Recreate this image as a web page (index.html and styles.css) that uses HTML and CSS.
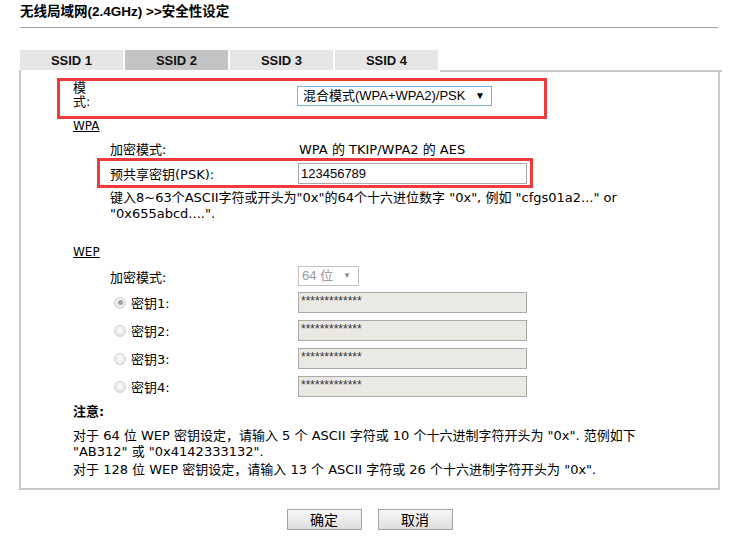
FILE: index.html
```html
<!DOCTYPE html>
<html lang="zh-CN">
<head>
<meta charset="utf-8">
<title>安全性设定</title>
<link rel="stylesheet" href="styles.css">
</head>
<body>
<div class="page">
  <h1 class="title">无线局域网(2.4GHz) &gt;&gt;安全性设定</h1>

  <div class="tabs">
    <div class="tab">SSID 1</div>
    <div class="tab active">SSID 2</div>
    <div class="tab">SSID 3</div>
    <div class="tab">SSID 4</div>
    <div class="tab-fill"></div>
  </div>

  <div class="panel">
    <div class="mark mark-mode">
      <div class="mode-label">模式:</div>
      <div class="select select-mode"><span>混合模式(WPA+WPA2)/PSK</span><span class="arrow">▼</span></div>
    </div>

    <div class="section">WPA</div>
    <div class="field field-enc">
      <div class="label">加密模式:</div>
      <div class="value">WPA 的 TKIP/WPA2 的 AES</div>
    </div>
    <div class="mark mark-psk">
      <div class="label">预共享密钥(PSK):</div>
      <input class="text" type="text" value="123456789">
    </div>
    <p class="help">键入8~63个ASCII字符或开头为"0x"的64个十六进位数字 "0x", 例如 "cfgs01a2..." or<br>"0x655abcd....".</p>

    <div class="section section-wep">WEP</div>
    <div class="field field-wep">
      <div class="label">加密模式:</div>
      <div class="select select-bits"><span>64 位</span><span class="arrow">▼</span></div>
    </div>
    <div class="keys">
      <div class="key">
        <div class="key-label"><span class="radio checked"></span>密钥1:</div>
        <input class="text text-off" type="text" value="*************" disabled>
      </div>
      <div class="key">
        <div class="key-label"><span class="radio"></span>密钥2:</div>
        <input class="text text-off" type="text" value="*************" disabled>
      </div>
      <div class="key">
        <div class="key-label"><span class="radio"></span>密钥3:</div>
        <input class="text text-off" type="text" value="*************" disabled>
      </div>
      <div class="key">
        <div class="key-label"><span class="radio"></span>密钥4:</div>
        <input class="text text-off" type="text" value="*************" disabled>
      </div>
    </div>

    <div class="note-title">注意:</div>
    <p class="note">对于 64 位 WEP 密钥设定，请输入 5 个 ASCII 字符或 10 个十六进制字符开头为 "0x". 范例如下<br>"AB312" 或 "0x4142333132".</p>
    <p class="note note-2">对于 128 位 WEP 密钥设定，请输入 13 个 ASCII 字符或 26 个十六进制字符开头为 "0x".</p>
  </div>

  <div class="buttons">
    <button class="btn" type="button">确定</button>
    <button class="btn" type="button">取消</button>
  </div>
</div>
</body>
</html>
```

FILE: styles.css
```css
* { box-sizing: border-box; }

body {
  margin: 0;
  background: #fff;
  color: #000;
  font-family: "DejaVu Sans", "Noto Sans CJK SC", sans-serif;
  font-size: 13px;
}

.page {
  width: 701px;
  margin-left: 19px;
}

.title {
  margin: 0 0 0 1px;
  width: 698px;
  padding: 5px 0 8px 0;
  font: bold 13.5px/14px "Liberation Sans", "Noto Sans CJK SC", sans-serif;
  border-bottom: 1px solid #a0a0a0;
}

.tabs {
  display: flex;
  margin-top: 22px;
  margin-left: 1px;
  height: 22px;
}

.tab {
  width: 103px;
  height: 20px;
  margin-right: 2px;
  background: #e6e6e6;
  text-align: center;
  font: bold 13px/21px "Liberation Sans", sans-serif;
  color: #111;
}

.tab.active { background: #c4c4c4; }

.tab-fill {
  flex: 1;
  margin-right: -2px;
  border-bottom: 2px solid #c8c8c8;
  border-right: 2px solid #c8c8c8;
  margin-top: 20px;
  height: 2px;
}

.panel {
  border: 2px solid #c8c8c8;
  border-top: 0;
  margin-top: -2px;
  padding: 8px 0 11px 0;
  height: 420px;
}

.mark {
  border: 3px solid #f23a3c;
}

.mark-mode {
  margin-left: 36px;
  width: 490px;
  height: 41px;
  display: flex;
  align-items: flex-start;
  padding-left: 13px;
}

.mode-label {
  width: 20px;
  margin-right: 204px;
  line-height: 14px;
}

.select {
  display: flex;
  align-items: center;
  justify-content: space-between;
  height: 20px;
  background: #fff;
}

.select-mode {
  margin-top: 5px;
  width: 195px;
  border: 1px solid #7eaee6;
  padding: 0 6px 0 5px;
  font: 13px/18px "Liberation Sans", "Noto Sans CJK SC", sans-serif;
}

.arrow { font-size: 10px; }

.section {
  margin-left: 52px;
  line-height: 14px;
  font-size: 12px;
  text-decoration: underline;
}

.section-wep { margin-top: 23px; }

.field {
  display: grid;
  grid-template-columns: 189px auto;
  align-items: center;
  margin-left: 89px;
}

.field-enc {
  margin-top: 5px;
  height: 20px;
}

.field-wep {
  margin-top: 7px;
  height: 20px;
  grid-template-columns: 188px auto;
}

.mark-psk {
  margin-left: 76px;
  width: 436px;
  height: 30px;
  display: grid;
  grid-template-columns: 188px 229px;
  align-items: center;
  padding-left: 10px;
}

.text {
  height: 21px;
  border: 1px solid #a9a9a9;
  padding: 0 2px;
  font: 13px "Liberation Sans", sans-serif;
  color: #000;
  background: #fff;
  margin: 0;
}

.mark-psk .text { width: 229px; }

.help {
  margin: 2px 0 0 89px;
  line-height: 16px;
}

.select-bits {
  width: 61px;
  border: 1px solid #c2c2c2;
  padding: 0 7px 0 3px;
  color: #999;
  font: 13px/18px "Liberation Sans", "Noto Sans CJK SC", sans-serif;
}

.select-bits .arrow { color: #888; font-size: 8px; }

.keys {
  margin-top: 6px;
  margin-left: 93px;
  display: flex;
  flex-direction: column;
  gap: 7px;
}

.key {
  display: grid;
  grid-template-columns: 184px 229px;
  align-items: center;
}

.key-label {
  display: flex;
  align-items: center;
  gap: 5px;
}

.radio {
  width: 12px;
  height: 12px;
  border-radius: 50%;
  border: 1px solid #cfcfcf;
  background: radial-gradient(circle at 50% 40%, #fcfcfc 0%, #ececec 60%, #dcdcdc 100%);
  display: flex;
  align-items: center;
  justify-content: center;
}

.radio.checked::after {
  content: "";
  width: 5px;
  height: 5px;
  border-radius: 50%;
  background: #a0a0a0;
}

.text-off {
  width: 229px;
  background: #ebe9e4;
  color: #333;
  -webkit-text-fill-color: #333;
  opacity: 1;
  font-size: 12px;
  padding-bottom: 4px;
}

.note-title {
  margin: 7px 0 0 52px;
  line-height: 16px;
  font-weight: bold;
}

.note {
  margin: 8px 0 0 52px;
  line-height: 16px;
}

.note-2 { margin-top: 2px; }

.buttons {
  display: flex;
  justify-content: center;
  gap: 16px;
  margin-top: 19px;
}

.btn {
  width: 75px;
  height: 21px;
  border: 1px solid #a3a3a3;
  background: linear-gradient(#f7f7f7, #dedede);
  font: 14px/19px "Noto Sans CJK SC", sans-serif;
  color: #000;
  padding: 0;
  margin: 0;
}
```
